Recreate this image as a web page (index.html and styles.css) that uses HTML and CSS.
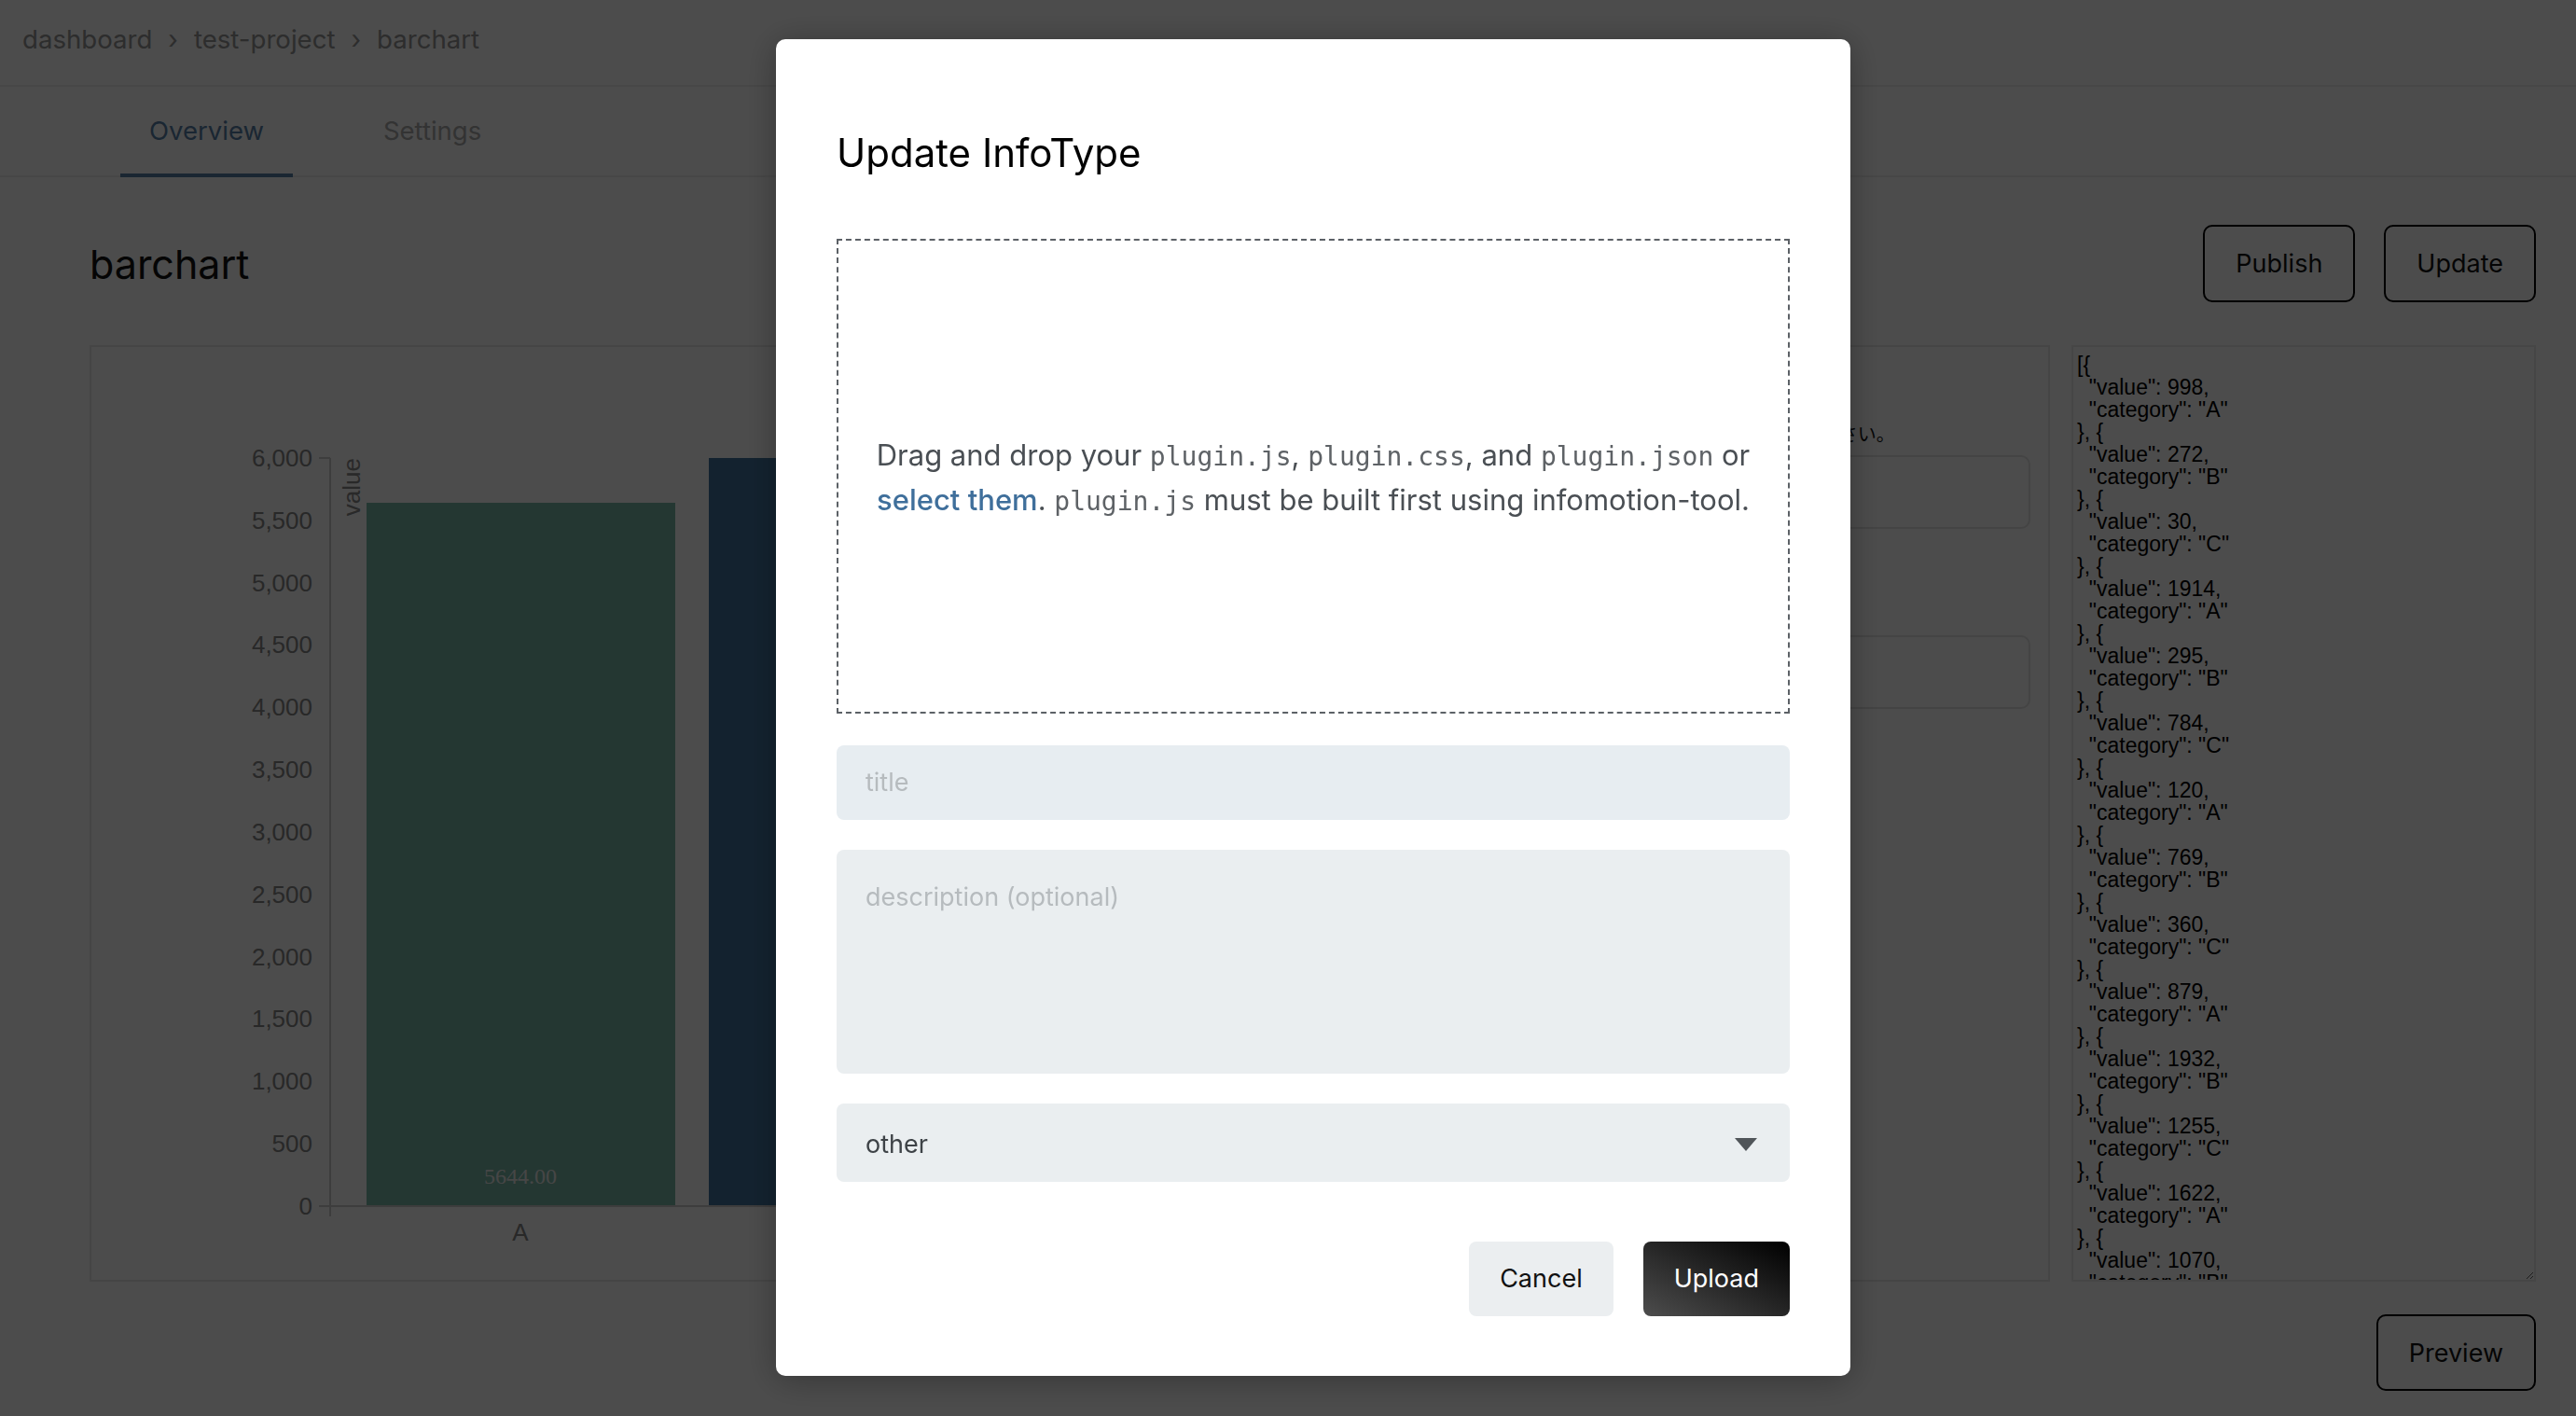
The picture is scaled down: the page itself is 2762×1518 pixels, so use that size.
FILE: index.html
```html
<!DOCTYPE html>
<html lang="ja">
<head>
<meta charset="utf-8">
<title>barchart</title>
<link rel="stylesheet" href="styles.css">
</head>
<body>
<header class="crumbs">
  <span class="crumb">dashboard</span><span class="sep">›</span><span class="crumb">test-project</span><span class="sep">›</span><span class="crumb">barchart</span>
</header>
<nav class="tabs">
  <span class="tab active">Overview</span>
  <span class="tab">Settings</span>
</nav>
<main class="main">
  <div class="title-row">
    <h1 class="page-title">barchart</h1>
    <div class="actions">
      <button class="btn-outline">Publish</button>
      <button class="btn-outline">Update</button>
    </div>
  </div>
  <div class="content">
    <section class="chart-box">
      <svg class="chart" width="1600" height="1000" viewBox="0 0 1600 1000">
        <g class="ylabels">
          <text x="237" y="128">6,000</text>
          <text x="237" y="195">5,500</text>
          <text x="237" y="262">5,000</text>
          <text x="237" y="328">4,500</text>
          <text x="237" y="395">4,000</text>
          <text x="237" y="462">3,500</text>
          <text x="237" y="529">3,000</text>
          <text x="237" y="596">2,500</text>
          <text x="237" y="663">2,000</text>
          <text x="237" y="729">1,500</text>
          <text x="237" y="796">1,000</text>
          <text x="237" y="863">500</text>
          <text x="237" y="930">0</text>
        </g>
        <rect x="295" y="167" width="331" height="754" fill="#78b9a8"/>
        <rect x="662" y="119" width="331" height="802" fill="#41749f"/>
        <rect x="1029" y="255" width="331" height="666" fill="#e45756"/>
        <g class="axis">
          <line x1="256" y1="119" x2="256" y2="932"/>
          <line x1="244" y1="119" x2="256" y2="119"/>
          <line x1="244" y1="921" x2="1360" y2="921"/>
        </g>
        <text class="ytitle" transform="translate(288,119) rotate(-90)">value</text>
        <text class="barval" x="460" y="897">5644.00</text>
        <text class="barval" x="827" y="897">5998.00</text>
        <text class="barval" x="1194" y="897">4980.00</text>
        <g class="xlabels">
          <text x="460" y="958">A</text>
          <text x="827" y="958">B</text>
          <text x="1194" y="958">C</text>
        </g>
      </svg>
      <div class="settings">
        <label class="set-label">データを入力してください。</label>
        <input class="set-input" type="text">
        <label class="set-label set-label-2">タイトル</label>
        <input class="set-input" type="text">
      </div>
    </section>
    <textarea class="json" spellcheck="false">[{
  "value": 998,
  "category": "A"
}, {
  "value": 272,
  "category": "B"
}, {
  "value": 30,
  "category": "C"
}, {
  "value": 1914,
  "category": "A"
}, {
  "value": 295,
  "category": "B"
}, {
  "value": 784,
  "category": "C"
}, {
  "value": 120,
  "category": "A"
}, {
  "value": 769,
  "category": "B"
}, {
  "value": 360,
  "category": "C"
}, {
  "value": 879,
  "category": "A"
}, {
  "value": 1932,
  "category": "B"
}, {
  "value": 1255,
  "category": "C"
}, {
  "value": 1622,
  "category": "A"
}, {
  "value": 1070,
  "category": "B"
}, {
  "value": 421,
  "category": "C"
}, {
  "value": 1431,
  "category": "A"
}]</textarea>
  </div>
  <div class="preview-row">
    <button class="btn-outline btn-preview">Preview</button>
  </div>
</main>

<div class="overlay">
  <div class="modal">
    <h2 class="modal-title">Update InfoType</h2>
    <div class="drop">
      <span class="drop-line">Drag and drop your <code>plugin.js</code>, <code>plugin.css</code>, and <code>plugin.json</code> or</span>
      <span class="drop-line"><a class="drop-link" href="#">select them</a>. <code>plugin.js</code> must be built first using infomotion-tool.</span>
    </div>
    <input class="field field-title" type="text" placeholder="title">
    <textarea class="field field-desc" placeholder="description (optional)"></textarea>
    <div class="select-wrap">
      <select class="field field-select">
        <option>other</option>
      </select>
      <svg class="select-arrow" width="24" height="14" viewBox="0 0 24 14"><path d="M0 0 H24 L12 14 Z" fill="#505559"/></svg>
    </div>
    <div class="modal-actions">
      <button class="btn btn-cancel">Cancel</button>
      <button class="btn btn-upload">Upload</button>
    </div>
  </div>
</div>
</body>
</html>
```
FILE: styles.css
```css
html, body {
  margin: 0;
  padding: 0;
}
body {
  width: 2762px;
  height: 1518px;
  overflow: hidden;
  background: #ffffff;
  color: #222;
  font-family: Inter, "Noto Sans CJK JP", sans-serif;
}

/* breadcrumb */
.crumbs {
  height: 83px;
  padding: 0 0 8px 24px;
  border-bottom: 2px solid #eeeeee;
  display: flex;
  align-items: center;
  font-size: 27.6px;
  color: #969696;
}
.sep {
  margin: 0 17px;
}

/* tabs */
.tabs {
  height: 95px;
  border-bottom: 2px solid #eeeeee;
  display: flex;
  gap: 66px;
  padding-left: 129px;
}
.tab {
  display: flex;
  align-items: center;
  padding: 0 31px;
  font-size: 27.5px;
  color: #ababab;
  border-bottom: 4px solid transparent;
  margin-bottom: -2px;
}
.tab.active {
  color: #577fa9;
  border-bottom-color: #577fa9;
}

/* main */
.main {
  padding: 51px 43px 0 96px;
}
.title-row {
  height: 83px;
  display: flex;
  align-items: center;
  justify-content: space-between;
}
.page-title {
  margin: 0;
  font-size: 43px;
  font-weight: 400;
  color: #111;
}
.actions {
  display: flex;
  gap: 31px;
}
.btn-outline {
  height: 83px;
  box-sizing: border-box;
  padding: 0 33px;
  border: 2px solid #000;
  border-radius: 10px;
  background: #fff;
  color: #111;
  font-family: Inter, sans-serif;
  font-size: 27px;
}

.content {
  display: flex;
  gap: 23px;
  margin-top: 46px;
  height: 1004px;
}
.chart-box {
  flex: 1;
  border: 2px solid #e8e8e8;
  display: flex;
  overflow: hidden;
}
.chart {
  flex: none;
  display: block;
}
.ylabels text {
  font-family: "Liberation Sans", Arial, sans-serif;
  font-size: 26px;
  fill: #868686;
  text-anchor: end;
}
.xlabels text {
  font-family: "Liberation Sans", Arial, sans-serif;
  font-size: 26px;
  fill: #868686;
  text-anchor: middle;
}
.axis line {
  stroke: #cccccc;
  stroke-width: 2;
}
.ytitle {
  font-family: "Liberation Sans", Arial, sans-serif;
  font-size: 26px;
  fill: #8a8a8a;
  text-anchor: end;
}
.barval {
  font-family: "Liberation Serif", "Times New Roman", serif;
  font-size: 24px;
  fill: #ececec;
  text-anchor: middle;
}

.settings {
  margin-left: auto;
  margin-right: 19px;
  width: 420px;
  padding-top: 78px;
  display: flex;
  flex-direction: column;
}
.set-label {
  font-size: 20px;
  line-height: 30px;
  color: #111;
  text-align: left;
  padding-left: 16px;
  font-family: "Noto Sans CJK JP", sans-serif;
}
.set-label-2 {
  margin-top: 76px;
}
.set-input {
  margin-top: 8px;
  height: 79px;
  box-sizing: border-box;
  border: 2px solid #e3e3e3;
  border-radius: 10px;
  background: #fff;
}

.json {
  width: 498px;
  height: 1004px;
  box-sizing: border-box;
  margin: 0;
  padding: 7px 4px 4px;
  border: 2px solid #ebebeb;
  font-family: "Liberation Sans", Arial, sans-serif;
  font-size: 23px;
  line-height: 24px;
  color: #000;
  background: #fff;
  overflow: hidden;
  resize: both;
  outline: none;
}

.preview-row {
  display: flex;
  justify-content: flex-end;
  margin-top: 35px;
}
.btn-preview {
  height: 82px;
}

/* modal */
.overlay {
  position: fixed;
  inset: 0;
  background: rgba(0, 0, 0, 0.702);
  display: flex;
  align-items: center;
  justify-content: center;
  padding-left: 54px;
}
.modal {
  width: 1152px;
  box-sizing: border-box;
  background: #fff;
  border-radius: 10px;
  padding: 64px 65px 64px;
  box-shadow: 0 4px 36px rgba(0, 0, 0, 0.3);
  display: flex;
  flex-direction: column;
  margin-top: -2px;
}
.modal-title {
  margin: 32px 0 0;
  font-size: 42px;
  line-height: 52px;
  font-weight: 400;
  color: #000;
}
.drop {
  margin-top: 66px;
  height: 509px;
  box-sizing: border-box;
  border: 2px dashed #5c6166;
  padding-top: 6px;
  display: flex;
  flex-direction: column;
  align-items: center;
  justify-content: center;
  font-size: 31px;
  line-height: 46px;
  color: #4a4f54;
}
.drop-line {
  white-space: nowrap;
}
.drop code {
  font-family: "DejaVu Sans Mono", "Liberation Mono", monospace;
  font-size: 28px;
  color: #5e6266;
}
.drop-link {
  color: #3f6f9b;
  font-weight: 500;
  text-decoration: none;
}

.field {
  display: block;
  width: 100%;
  box-sizing: border-box;
  border: 0;
  border-radius: 8px;
  background: #eaeef0;
  font-family: Inter, sans-serif;
  font-size: 27px;
  color: #3e4347;
  padding: 0 31px;
  outline: none;
}
.field::placeholder {
  color: #b6bbbe;
}
.field-title {
  height: 80px;
  margin-top: 34px;
  background: #e7edf1;
}
.field-desc {
  height: 240px;
  margin-top: 32px;
  padding-top: 32px;
  line-height: 38px;
  resize: none;
}
.select-wrap {
  position: relative;
  margin-top: 32px;
}
.field-select {
  height: 84px;
  padding-top: 3px;
  appearance: none;
  -webkit-appearance: none;
}
.select-arrow {
  position: absolute;
  right: 35px;
  top: 37px;
}

.modal-actions {
  display: flex;
  justify-content: flex-end;
  gap: 32px;
  margin-top: 64px;
}
.btn {
  height: 80px;
  padding: 0 33px;
  border: 0;
  border-radius: 8px;
  font-family: Inter, sans-serif;
  font-size: 27px;
}
.btn-cancel {
  background: #ebeef0;
  color: #111;
}
.btn-upload {
  background: linear-gradient(to top right, #4d4d4d, #000000);
  color: #fff;
}
```
